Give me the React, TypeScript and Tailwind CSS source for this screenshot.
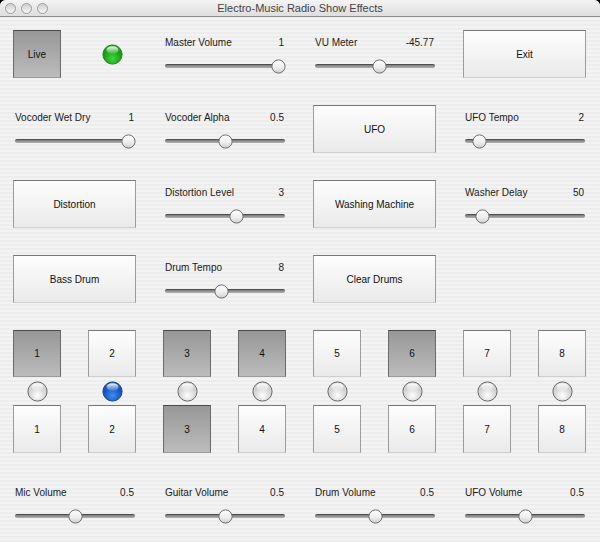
import React from 'react'

const font = { fontFamily: '"Liberation Sans", "DejaVu Sans", sans-serif' }

type Cell =
  | { kind: 'button'; label: string; dark?: boolean }
  | { kind: 'slider'; label: string; value: string; pos: number }
  | { kind: 'live' }
  | { kind: 'empty' }

const rows: Cell[][] = [
  [
    { kind: 'live' },
    { kind: 'slider', label: 'Master Volume', value: '1', pos: 113 },
    { kind: 'slider', label: 'VU Meter', value: '-45.77', pos: 64 },
    { kind: 'button', label: 'Exit' },
  ],
  [
    { kind: 'slider', label: 'Vocoder Wet Dry', value: '1', pos: 113 },
    { kind: 'slider', label: 'Vocoder Alpha', value: '0.5', pos: 60 },
    { kind: 'button', label: 'UFO' },
    { kind: 'slider', label: 'UFO Tempo', value: '2', pos: 14 },
  ],
  [
    { kind: 'button', label: 'Distortion' },
    { kind: 'slider', label: 'Distortion Level', value: '3', pos: 71 },
    { kind: 'button', label: 'Washing Machine' },
    { kind: 'slider', label: 'Washer Delay', value: '50', pos: 17 },
  ],
  [
    { kind: 'button', label: 'Bass Drum' },
    { kind: 'slider', label: 'Drum Tempo', value: '8', pos: 56 },
    { kind: 'button', label: 'Clear Drums' },
    { kind: 'empty' },
  ],
]

const topPads = [true, false, true, true, false, true, false, false]
const bottomPads = [false, false, true, false, false, false, false, false]

const bottomSliders = [
  { label: 'Mic Volume', value: '0.5', pos: 60 },
  { label: 'Guitar Volume', value: '0.5', pos: 60 },
  { label: 'Drum Volume', value: '0.5', pos: 60 },
  { label: 'UFO Volume', value: '0.5', pos: 60 },
]

function Led({ color }: { color: 'green' | 'blue' | 'gray' }) {
  const c = {
    green: ['#3fd83a', '#17a012', '#2f7a2a'],
    blue: ['#3d8ef0', '#1553c0', '#23457c'],
    gray: ['#ffffff', '#d2d2d2', '#6a6a6a'],
  }[color]
  const id = `led-${color}`
  return (
    <svg width="21" height="21" viewBox="0 0 21 21">
      <defs>
        <radialGradient id={id} cx="50%" cy="70%" r="60%">
          <stop offset="0%" stopColor={c[0]} />
          <stop offset="75%" stopColor={c[1]} />
          <stop offset="100%" stopColor={c[1]} />
        </radialGradient>
        <linearGradient id={`${id}-hi`} x1="0" y1="0" x2="0" y2="1">
          <stop offset="0%" stopColor="#fff" stopOpacity="0.95" />
          <stop offset="100%" stopColor="#fff" stopOpacity="0.1" />
        </linearGradient>
      </defs>
      <circle cx="10.5" cy="10.5" r="9.6" fill={`url(#${id})`} stroke={c[2]} strokeWidth="1" />
      <ellipse cx="10.5" cy="6" rx="6" ry="3.8" fill={`url(#${id}-hi)`} />
    </svg>
  )
}

function Thumb() {
  return (
    <svg width="15" height="15" viewBox="0 0 15 15">
      <defs>
        <linearGradient id="thumb-g" x1="0" y1="0" x2="0" y2="1">
          <stop offset="0%" stopColor="#ffffff" />
          <stop offset="60%" stopColor="#ececec" />
          <stop offset="100%" stopColor="#cdcdcd" />
        </linearGradient>
      </defs>
      <circle cx="7.5" cy="7.5" r="6.6" fill="url(#thumb-g)" stroke="#6f6f6f" strokeWidth="1" />
    </svg>
  )
}

function Slider({ label, value, pos }: { label: string; value: string; pos: number }) {
  return (
    <div className="flex w-[123px] flex-col pt-[7px] pl-[2px]">
      <div className="flex h-[12px] items-center justify-between pr-[2px] text-[10px] leading-[12px] text-[#1a1a1a]">
        <span>{label}</span>
        <span>{value}</span>
      </div>
      <div className="relative mt-[10px] flex h-[14px] w-[120px] items-center">
        <div className="h-[4px] w-full rounded-full border-t border-[#4e4e4e] bg-gradient-to-b from-[#7a7a7a] to-[#b4b4b4]" />
        <div className="absolute top-[-0.5px]" style={{ left: pos - 7.5 }}>
          <Thumb />
        </div>
      </div>
    </div>
  )
}

function Button({ label, dark, w = 'w-[123px]', h = 'h-[48px]' }: { label: string; dark?: boolean; w?: string; h?: string }) {
  return (
    <div
      className={`${w} ${h} flex items-center justify-center border text-[10px] text-[#111] ${
        dark
          ? 'border-[#6a6a6a] border-t-[#4a4a4a] border-b-[#9a9a9a] bg-gradient-to-b from-[#979797] to-[#bcbcbc]'
          : 'border-[#9c9c9c] border-t-[#777] border-b-[#cfcfcf] bg-gradient-to-b from-[#fdfdfd] to-[#eaeaea]'
      }`}
    >
      {label}
    </div>
  )
}

function CellView({ cell }: { cell: Cell }) {
  if (cell.kind === 'button') return <Button label={cell.label} dark={cell.dark} />
  if (cell.kind === 'slider') return <Slider label={cell.label} value={cell.value} pos={cell.pos} />
  if (cell.kind === 'live')
    return (
      <div className="flex w-[123px] items-center">
        <Button label="Live" dark w="w-[48px]" />
        <div className="ml-[41px]">
          <Led color="green" />
        </div>
      </div>
    )
  return <div className="w-[123px]" />
}

export default function App() {
  return (
    <div className="h-[542px] w-[600px] overflow-hidden bg-black" style={font}>
      <div className="flex h-full w-full flex-col overflow-hidden rounded-t-[6px] bg-[repeating-linear-gradient(0deg,#ededed_0px,#ededed_2px,#f3f3f3_2px,#f3f3f3_4px)]">
        <div className="relative flex h-[17px] items-center justify-center border-b border-[#8d8d8d] bg-gradient-to-b from-[#f4f4f4] to-[#dedede]">
          <div className="absolute left-[5px] top-[3px] flex gap-[5px]">
            {[0, 1, 2].map((i) => (
              <div key={i} className="h-[11px] w-[11px] rounded-full border border-[#999] bg-gradient-to-b from-[#cfcfcf] to-[#f6f6f6]" />
            ))}
          </div>
          <span className="text-[11px] text-[#444]">Electro-Music Radio Show Effects</span>
        </div>

        <div className="flex flex-col pl-[13px] pt-[13px]">
          {rows.map((row, r) => (
            <div key={r} className="flex h-[75px] gap-[27px]">
              {row.map((cell, c) => (
                <div key={c} className="h-[48px]">
                  <CellView cell={cell} />
                </div>
              ))}
            </div>
          ))}

          <div className="flex gap-[27px]">
            {topPads.map((d, i) => (
              <Button key={i} label={String(i + 1)} dark={d} w="w-[48px]" h="h-[47px]" />
            ))}
          </div>
          <div className="flex h-[28px] items-center gap-[27px]">
            {topPads.map((_, i) => (
              <div key={i} className="flex w-[48px] justify-center">
                <Led color={i === 1 ? 'blue' : 'gray'} />
              </div>
            ))}
          </div>
          <div className="flex h-[75px] gap-[27px]">
            {bottomPads.map((d, i) => (
              <Button key={i} label={String(i + 1)} dark={d} w="w-[48px]" h="h-[48px]" />
            ))}
          </div>
          <div className="flex gap-[27px]">
            {bottomSliders.map((s) => (
              <Slider key={s.label} label={s.label} value={s.value} pos={s.pos} />
            ))}
          </div>
        </div>
      </div>
    </div>
  )
}
